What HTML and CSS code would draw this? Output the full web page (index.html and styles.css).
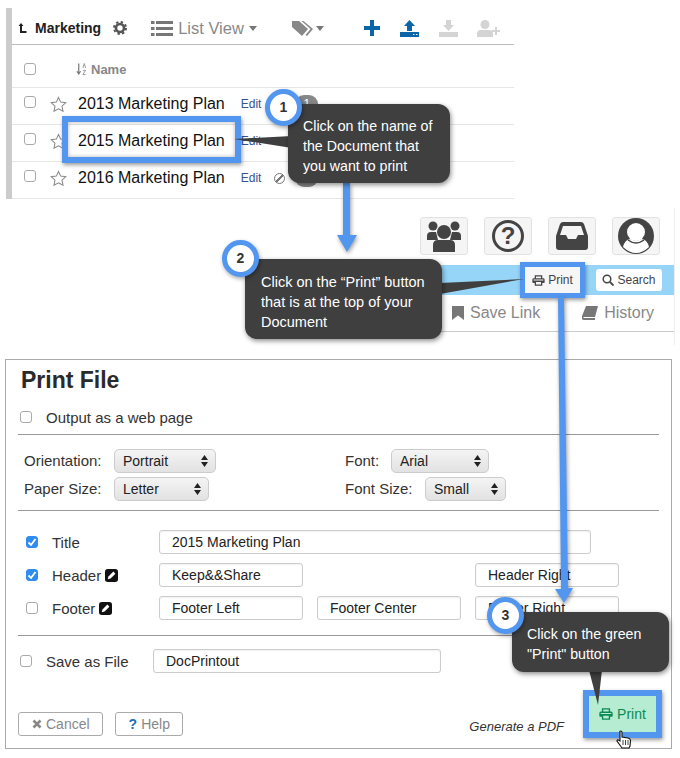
FILE: index.html
```html
<!DOCTYPE html>
<html lang="en">
<head>
    <meta charset="UTF-8">
    <meta name="viewport" content="width=device-width, initial-scale=1.0">
    <title>How to print a Document</title>
    <link rel="stylesheet" href="styles.css">
</head>
<body>

<svg class="defs" width="0" height="0">
    <symbol id="printer" viewBox="0 0 16 14">
        <path d="M4 5V1h8v4M4 9H1V6q0-1 1-1h12q1 0 1 1v3h-3" fill="none" stroke="currentColor" stroke-width="1.6"/>
        <path d="M1 7h14v3h-3V9H4v1H1z" fill="currentColor"/>
        <path d="M4 9v4h8V9" fill="none" stroke="currentColor" stroke-width="1.6"/>
    </symbol>
    <symbol id="star" viewBox="0 0 18 18">
        <path d="M9 1.500l2.300 5 5.400.6-4 3.700 1.100 5.400L9 13.500l-4.800 2.700 1.100-5.400-4-3.700 5.400-.6z" fill="none" stroke="#8a8a8a" stroke-width="1.100"/>
    </symbol>
    <symbol id="pencil" viewBox="0 0 14 14">
        <rect width="14" height="14" rx="3" fill="#111"/>
        <path d="M3 11l.7-3L9 2.800 11.200 5 6 10.300z" fill="#fff"/>
    </symbol>
    <symbol id="sort" viewBox="0 0 12 14">
        <path d="M3 1v11M1 9.500L3 12.500 5 9.500" fill="none" stroke="#777" stroke-width="1.300"/>
        <path d="M7.500 6L9 1l1.500 5M7.500 8.500h3l-3 4.500h3" fill="none" stroke="#888" stroke-width=".9"/>
    </symbol>
    <symbol id="tick" viewBox="0 0 12 12">
        <path d="M2.500 6.500l2.500 2.500 4.500-6" fill="none" stroke="#fff" stroke-width="1.800"/>
    </symbol>
    <symbol id="updown" viewBox="0 0 7 12">
        <path d="M3.500 0L7 5H0zM3.500 12L0 7h7z" fill="#222"/>
    </symbol>
</svg>

<section class="doc-list">
    <div class="list-toolbar">
        <svg class="folder-up" width="9" height="12" viewBox="0 0 9 12"><path d="M3 1L.5 4H2v7h6.500V9H4V4h1.500z" fill="#222"/></svg>
        <span class="folder-name">Marketing</span>
        <svg class="gear" width="14" height="14" viewBox="0 0 14 14">
            <circle cx="7" cy="7" r="4" fill="none" stroke="#555" stroke-width="2.600"/>
            <circle cx="7" cy="7" r="6" fill="none" stroke="#555" stroke-width="2" stroke-dasharray="2.400 2.310"/>
        </svg>
        <svg class="list-icon" width="22" height="17" viewBox="0 0 22 17">
            <path d="M0 1h3.500v3H0zM5 1h17v3H5zM0 7h3.500v3H0zM5 7h17v3H5zM0 13h3.500v3H0zM5 13h17v3H5z" fill="#777"/>
        </svg>
        <span class="view-name">List View</span>
        <span class="caret"></span>
        <svg class="tag-icon" width="22" height="15" viewBox="0 0 22 15">
            <path d="M0 0h7l9 8-6 7-10-9z" fill="#888"/>
            <path d="M9.500 0h2l9.500 8-6 7-1.500-1 5-6z" fill="#888"/>
        </svg>
        <span class="caret caret-small"></span>
        <svg class="plus-icon" width="16" height="16" viewBox="0 0 16 16"><path d="M6 0h4v6h6v4h-6v6H6v-6H0V6h6z" fill="#0a66a8"/></svg>
        <svg class="tray-icon" width="19" height="17" viewBox="0 0 19 17"><path d="M9.500 0L15 6h-3v5H7V6H4zM0 12h19v5H0z" fill="#0a66a8"/><path d="M13 14.500h1.500M16 14.500h1.500" stroke="#fff"/></svg>
        <svg class="tray-icon" width="19" height="17" viewBox="0 0 19 17"><path d="M7 0h5v5h3l-5.500 6L4 5h3zM0 12h19v5H0z" fill="#d4d4d4"/></svg>
        <svg class="adduser-icon" width="23" height="17" viewBox="0 0 23 17"><circle cx="8" cy="4.500" r="4.500" fill="#d4d4d4"/><path d="M0 17v-3q0-4 4-4h8q4 0 4 4v3zM15 10h3V7h2v3h3v2h-3v3h-2v-3h-3z" fill="#d4d4d4"/></svg>
    </div>

    <div class="list-head">
        <span class="check"></span>
        <svg class="sort-icon" width="11" height="14"><use href="#sort"/></svg>
        <span class="head-name">Name</span>
    </div>

    <div class="doc-row">
        <span class="check"></span>
        <svg class="star" width="17" height="17"><use href="#star"/></svg>
        <span class="doc-name">2013 Marketing Plan</span>
        <a class="doc-edit">Edit</a>
        <span class="no-icon"></span>
        <span class="pill">1</span>
    </div>
    <div class="doc-row">
        <span class="check"></span>
        <svg class="star" width="17" height="17"><use href="#star"/></svg>
        <span class="doc-name">2015 Marketing Plan</span>
        <a class="doc-edit">Edit</a>
    </div>
    <div class="doc-row">
        <span class="check"></span>
        <svg class="star" width="17" height="17"><use href="#star"/></svg>
        <span class="doc-name">2016 Marketing Plan</span>
        <a class="doc-edit">Edit</a>
        <span class="no-icon"></span>
        <span class="pill">1</span>
    </div>
</section>

<section class="doc-top">
    <div class="app-icons">
        <div class="app-icon">
            <svg width="34" height="32" viewBox="0 0 34 32">
                <circle cx="6" cy="6" r="4.500" fill="#444"/><circle cx="28" cy="6" r="4.500" fill="#444"/>
                <path d="M0 20v-4q0-4 4-4h5l2 8zM34 20v-4q0-4-4-4h-5l-2 8z" fill="#444"/>
                <circle cx="17" cy="12" r="7" fill="#444"/>
                <path d="M6 32v-7q0-5 5-5h12q5 0 5 5v7z" fill="#444"/>
            </svg>
        </div>
        <div class="app-icon">
            <span class="help-ring">?</span>
        </div>
        <div class="app-icon">
            <svg width="32" height="28" viewBox="0 0 32 28">
                <path d="M7 0h18q2 0 3 2l4 12v11q0 3-3 3H3q-3 0-3-3V14L4 2q1-2 3-2zM7 4L4 13h6l2 4h8l2-4h6L25 4z" fill="#444" fill-rule="evenodd"/>
            </svg>
        </div>
        <div class="app-icon">
            <svg width="36" height="36" viewBox="0 0 36 36">
                <circle cx="18" cy="18" r="18" fill="#444"/>
                <circle cx="18" cy="14" r="9" fill="#fff"/>
                <path d="M5 29q2-8 8-8 5 3 10 0 6 0 8 8-13 12-26 0z" fill="#fff"/>
                <path d="M10 22q8 6 16 0" fill="none" stroke="#444" stroke-width="1.500"/>
            </svg>
        </div>
    </div>
    <div class="doc-bar">
        <span class="bar-btn print-btn"><svg width="13" height="11"><use href="#printer"/></svg>Print</span>
        <span class="bar-btn search-btn">
            <svg width="12" height="12" viewBox="0 0 12 12"><circle cx="5" cy="5" r="3.800" fill="none" stroke="currentColor" stroke-width="1.500"/><path d="M8 8l3.500 3.500" stroke="currentColor" stroke-width="1.800"/></svg>Search
        </span>
    </div>
    <div class="doc-tabs">
        <span class="doc-tab"><svg width="12" height="14" viewBox="0 0 12 14"><path d="M0 0h12v14L6 9.500 0 14z" fill="#777"/></svg>Save Link</span>
        <span class="doc-tab"><svg width="16" height="14" viewBox="0 0 16 14"><path d="M4 0h12l-3 11H2q-1 0-.5 1H13v2H2Q-1 14 0 10z" fill="#777"/></svg>History</span>
    </div>
</section>

<section class="print-dialog">
    <h2>Print File</h2>
    <div class="opt-row">
        <span class="check"></span>
        <span>Output as a web page</span>
    </div>
    <hr>
    <div class="page-opts">
        <div class="opt-line">
            <span class="opt-label label-orient">Orientation:</span>
            <span class="select sel-orient">Portrait<svg width="7" height="12"><use href="#updown"/></svg></span>
            <span class="opt-label label-font">Font:</span>
            <span class="select sel-font">Arial<svg width="7" height="12"><use href="#updown"/></svg></span>
        </div>
        <div class="opt-line">
            <span class="opt-label label-orient">Paper Size:</span>
            <span class="select sel-paper">Letter<svg width="7" height="12"><use href="#updown"/></svg></span>
            <span class="opt-label label-fontsize">Font Size:</span>
            <span class="select sel-size">Small<svg width="7" height="12"><use href="#updown"/></svg></span>
        </div>
    </div>
    <hr>
    <div class="fields">
        <div class="field-row">
            <span class="check checked"><svg width="12" height="12"><use href="#tick"/></svg></span>
            <span class="field-label">Title</span>
            <span class="field field-wide">2015 Marketing Plan</span>
        </div>
        <div class="field-row">
            <span class="check checked"><svg width="12" height="12"><use href="#tick"/></svg></span>
            <span class="field-label">Header <svg width="13" height="13"><use href="#pencil"/></svg></span>
            <span class="field">Keep&amp;&amp;Share</span>
            <span class="field field-gap">Header Right</span>
        </div>
        <div class="field-row">
            <span class="check"></span>
            <span class="field-label">Footer <svg width="13" height="13"><use href="#pencil"/></svg></span>
            <span class="field">Footer Left</span>
            <span class="field">Footer Center</span>
            <span class="field">Footer Right</span>
        </div>
    </div>
    <hr>
    <div class="save-row">
        <span class="check"></span>
        <span class="save-label">Save as File</span>
        <span class="field field-save">DocPrintout</span>
    </div>
    <div class="dialog-foot">
        <span class="foot-btn"><svg width="10" height="10" viewBox="0 0 10 10"><path d="M1.500 1.500l7 7M8.500 1.500l-7 7" stroke="#888" stroke-width="2.600"/></svg>Cancel</span>
        <span class="foot-btn"><b class="help-mark">?</b>Help</span>
        <span class="pdf-note">Generate a PDF</span>
        <span class="green-print"><svg width="14" height="12"><use href="#printer"/></svg>Print</span>
    </div>
</section>

<!-- tutorial annotations on top of the screenshots -->
<div class="name-box"></div>

<svg class="marks" width="680" height="758" viewBox="0 0 680 758">
    <g class="arrows">
        <path d="M343 183h7v52h7l-10 17-10-17h6z"/>
        <path d="M558 297h6l4 291h5l-9 15-9-14h6z"/>
    </g>
    <g class="tails">
        <path d="M292 136L234 139 292 148z"/>
        <path d="M440 283L524 279 440 294z"/>
        <path d="M589 670L598 705 602 670z"/>
    </g>
</svg>

<div class="callout callout-one">Click on the name of the Document that you want to print</div>
<div class="callout callout-two">Click on the “Print” button that is at the top of your Document</div>
<div class="callout callout-three">Click on the green "Print" button</div>

<span class="step step-one">1</span>
<span class="step step-two">2</span>
<span class="step step-three">3</span>

<svg class="hand" width="16" height="19" viewBox="0 0 16 19">
    <path d="M4.500 1q1.500 0 1.500 1.500V7l6 1q2.500.5 2.500 3l-.5 5-1 2H6L1 11q0-1.500 1.500-1L4 11V2.500Q3.500 1 4.500 1z" fill="#fff" stroke="#111" stroke-width="1.100"/>
    <path d="M7 10v5M9.500 10v5M12 10v5" stroke="#111" stroke-width=".8"/>
</svg>

</body>
</html>
```

FILE: styles.css
```css
* {
    box-sizing: border-box;
}

body {
    font-family: "Liberation Sans", Arial, sans-serif;
    background-color: #fff;
    color: #333;
    margin: 0;
    width: 680px;
    height: 758px;
    position: relative;
    overflow: hidden;
}

svg {
    flex: none;
}

.defs {
    position: absolute;
}

.check {
    width: 12px;
    height: 12px;
    flex: none;
    display: inline-block;
    background-color: #fff;
    border: 1px solid #aaa;
    border-radius: 3px;
}

.check.checked {
    background-color: #2f8cf0;
    border-color: #2f8cf0;
}

.check.checked svg {
    display: block;
    margin: -1px;
}

/* Document list */
.doc-list {
    width: 508px;
    height: 191px;
    margin: 8px 0 0 6px;
    border-left: 6px solid #ccc;
}

.list-toolbar {
    height: 37px;
    padding-top: 4px;
    display: flex;
    align-items: center;
    border-bottom: 1px solid #bbb;
}

.folder-up {
    margin-left: 6px;
}

.folder-name {
    margin-left: 8px;
    font-size: 14px;
    font-weight: bold;
    color: #222;
}

.gear {
    margin-left: 12px;
}

.list-icon {
    margin-left: 24px;
}

.view-name {
    margin-left: 5px;
    font-size: 16.500px;
    color: #888;
}

.caret {
    margin-left: 5px;
    border-left: 4.500px solid transparent;
    border-right: 4.500px solid transparent;
    border-top: 5px solid #777;
}

.caret-small {
    margin-left: 2px;
    border-left-width: 4px;
    border-right-width: 4px;
}

.tag-icon {
    margin-left: 35px;
}

.plus-icon {
    margin-left: 40px;
}

.tray-icon {
    margin-left: 20px;
}

.tray-icon + .tray-icon {
    margin-left: 20px;
}

.adduser-icon {
    margin-left: 19px;
}

.list-head {
    height: 43px;
    display: flex;
    align-items: center;
    padding: 6px 0 0 12px;
    border-bottom: 1px solid #e6e6e6;
}

.sort-icon {
    margin-left: 40px;
}

.head-name {
    margin-left: 4px;
    font-size: 13px;
    font-weight: bold;
    color: #888;
}

.doc-row {
    height: 37px;
    display: flex;
    align-items: center;
    padding: 0 0 4px 12px;
    border-bottom: 1px solid #e6e6e6;
}

.doc-row .check {
    margin-top: -4px;
}

.star {
    margin-left: 14px;
}

.doc-name {
    margin-left: 11px;
    font-size: 16px;
    color: #111;
}

.doc-edit {
    margin-left: 16px;
    font-size: 12px;
    color: #34538f;
}

.no-icon {
    width: 11px;
    height: 11px;
    margin-left: 13px;
    border: 1.500px solid #777;
    border-radius: 50%;
    background: linear-gradient(135deg, transparent 44%, #777 44%, #777 56%, transparent 56%);
}

.pill {
    margin-left: 10px;
    padding: 0 8px;
    height: 18px;
    line-height: 18px;
    border-radius: 9px;
    font-size: 12px;
    color: #fff;
    background-color: #888;
}

/* Top of the Document page */
.doc-top {
    width: 425px;
    height: 137px;
    margin: 9px 0 0 250px;
    padding-top: 9px;
    border-right: 1px solid #eee;
}

.app-icons {
    display: flex;
    justify-content: flex-end;
    gap: 16px;
    padding-right: 14px;
}

.app-icon {
    width: 48px;
    height: 38px;
    display: flex;
    align-items: center;
    justify-content: center;
    background-color: #f5f5f5;
    border: 1px solid #e2e2e2;
    border-radius: 3px;
}

.help-ring {
    width: 32px;
    height: 32px;
    border: 3px solid #444;
    border-radius: 50%;
    text-align: center;
    line-height: 26px;
    font-size: 24px;
    font-weight: bold;
    color: #444;
}

.doc-bar {
    height: 30px;
    margin-top: 10px;
    display: flex;
    align-items: center;
    justify-content: flex-end;
    gap: 11px;
    padding-right: 12px;
    background-color: #96d5f8;
}

.bar-btn {
    display: flex;
    align-items: center;
    gap: 3px;
    font-size: 12px;
    color: #444;
    background-color: #f6f6f6;
}

.print-btn {
    width: 65px;
    height: 36px;
    justify-content: center;
    border: 5px solid #5296f0;
    box-shadow: 1px 2px 4px rgba(0, 0, 0, 0.4);
}

.search-btn {
    width: 66px;
    height: 22px;
    justify-content: center;
    border-radius: 3px;
    background-color: #fff;
}

.doc-tabs {
    height: 37px;
    display: flex;
    align-items: center;
    justify-content: flex-end;
    gap: 42px;
    padding-right: 20px;
    border-bottom: 1px solid #ccc;
}

.doc-tab {
    display: flex;
    align-items: center;
    gap: 6px;
    font-size: 16px;
    color: #888;
}

/* Print dialog */
.print-dialog {
    width: 667px;
    height: 390px;
    margin: 14px 0 0 5px;
    padding: 0 12px;
    border: 1px solid #aaa;
}

.print-dialog h2 {
    margin: 0;
    padding-left: 3px;
    height: 40px;
    line-height: 40px;
    font-size: 23px;
    color: #2a2a2a;
}

.print-dialog hr {
    height: 1px;
    margin: 0;
    border: 0;
    background-color: #999;
}

.opt-row {
    height: 34px;
    display: flex;
    align-items: center;
    gap: 14px;
    padding-left: 2px;
    font-size: 15px;
}

.page-opts {
    height: 75px;
    padding-top: 14px;
    font-size: 15px;
}

.opt-line {
    height: 24px;
    margin-bottom: 4px;
    display: flex;
    align-items: center;
}

.opt-label {
    padding-bottom: 2px;
}

.label-orient {
    width: 90px;
    margin-left: 6px;
}

.label-font {
    width: 46px;
    margin-left: 129px;
}

.label-fontsize {
    width: 80px;
    margin-left: 136px;
}

.select {
    height: 24px;
    display: flex;
    align-items: center;
    justify-content: space-between;
    padding: 0 7px 0 8px;
    font-size: 14px;
    color: #222;
    background: linear-gradient(#f4f4f4, #e2e2e2);
    border: 1px solid #ccc;
    border-radius: 5px;
}

.sel-orient {
    width: 102px;
}

.sel-paper {
    width: 95px;
}

.sel-font {
    width: 98px;
}

.sel-size {
    width: 81px;
}

.fields {
    height: 124px;
    padding-top: 19px;
    display: flex;
    flex-direction: column;
    gap: 9px;
}

.field-row {
    height: 24px;
    display: flex;
    align-items: center;
    gap: 14px;
    padding-left: 8px;
}

.field-label {
    width: 100px;
    margin-right: -7px;
    font-size: 15px;
    display: flex;
    align-items: center;
    gap: 4px;
}

.field {
    width: 144px;
    height: 24px;
    line-height: 22px;
    padding-left: 12px;
    font-size: 14px;
    color: #222;
    background-color: #fff;
    border: 1px solid #ccc;
    border-radius: 3px;
    box-shadow: inset 0 1px 2px rgba(0, 0, 0, 0.06);
}

.field-wide {
    width: 432px;
}

.field-gap {
    margin-left: 158px;
}

.save-row {
    height: 24px;
    margin-top: 13px;
    display: flex;
    align-items: center;
    padding-left: 2px;
    font-size: 15px;
}

.save-label {
    width: 107px;
    margin-left: 14px;
}

.field-save {
    width: 288px;
}

.dialog-foot {
    height: 48px;
    margin-top: 17px;
    display: flex;
    align-items: flex-end;
    padding-bottom: 2px;
}

.foot-btn {
    height: 24px;
    padding: 0 12px 0 13px;
    display: flex;
    align-items: center;
    gap: 4px;
    font-size: 14px;
    color: #888;
    border: 1px solid #aaa;
    border-radius: 3px;
}

.foot-btn + .foot-btn {
    margin-left: 12px;
}

.help-mark {
    color: #1a6fb5;
}

.pdf-note {
    margin-left: auto;
    margin-right: 19px;
    margin-bottom: 2px;
    font-size: 13px;
    font-style: italic;
    color: #333;
}

.green-print {
    width: 79px;
    height: 48px;
    margin-right: -3px;
    margin-bottom: -2px;
    display: flex;
    align-items: center;
    justify-content: center;
    gap: 4px;
    font-size: 14px;
    color: #0c8a55;
    background-color: #b5ecd2;
    border: 6px solid #5296f0;
    box-shadow: 1px 2px 4px rgba(0, 0, 0, 0.4);
}

/* Annotations */
.name-box {
    position: absolute;
    left: 62px;
    top: 116px;
    width: 179px;
    height: 47px;
    border: 6px solid #5296f0;
    box-shadow: 1px 2px 4px rgba(0, 0, 0, 0.4), inset 0 0 4px rgba(0, 0, 0, 0.3);
}

.marks {
    position: absolute;
    left: 0;
    top: 0;
}

.arrows {
    fill: #5296f0;
    filter: drop-shadow(1px 2px 2px rgba(0, 0, 0, 0.4));
}

.tails {
    fill: #3f3f3f;
}

.callout {
    position: absolute;
    padding-left: 15px;
    padding-top: 12px;
    font-size: 14.200px;
    line-height: 20px;
    color: #fff;
    background-color: #3f3f3f;
    border-radius: 12px;
    box-shadow: 1px 2px 5px rgba(0, 0, 0, 0.45);
}

.callout-one {
    left: 288px;
    top: 104px;
    width: 162px;
    height: 79px;
    padding-right: 8px;
}

.callout-two {
    left: 245px;
    top: 259px;
    width: 197px;
    height: 80px;
    padding-top: 13px;
    padding-left: 16px;
    padding-right: 10px;
    font-size: 14.500px;
}

.callout-three {
    left: 512px;
    top: 612px;
    width: 157px;
    height: 60px;
    padding-right: 12px;
}

.step {
    position: absolute;
    width: 37px;
    height: 37px;
    text-align: center;
    line-height: 27px;
    font-size: 14px;
    font-weight: bold;
    color: #333;
    background-color: #fff;
    border: 5px solid #5296f0;
    border-radius: 50%;
    box-shadow: 1px 2px 4px rgba(0, 0, 0, 0.35);
}

.step-one {
    left: 265px;
    top: 89px;
}

.step-two {
    left: 222px;
    top: 240px;
}

.step-three {
    left: 487px;
    top: 597px;
}

.hand {
    position: absolute;
    left: 616px;
    top: 730px;
}
```
